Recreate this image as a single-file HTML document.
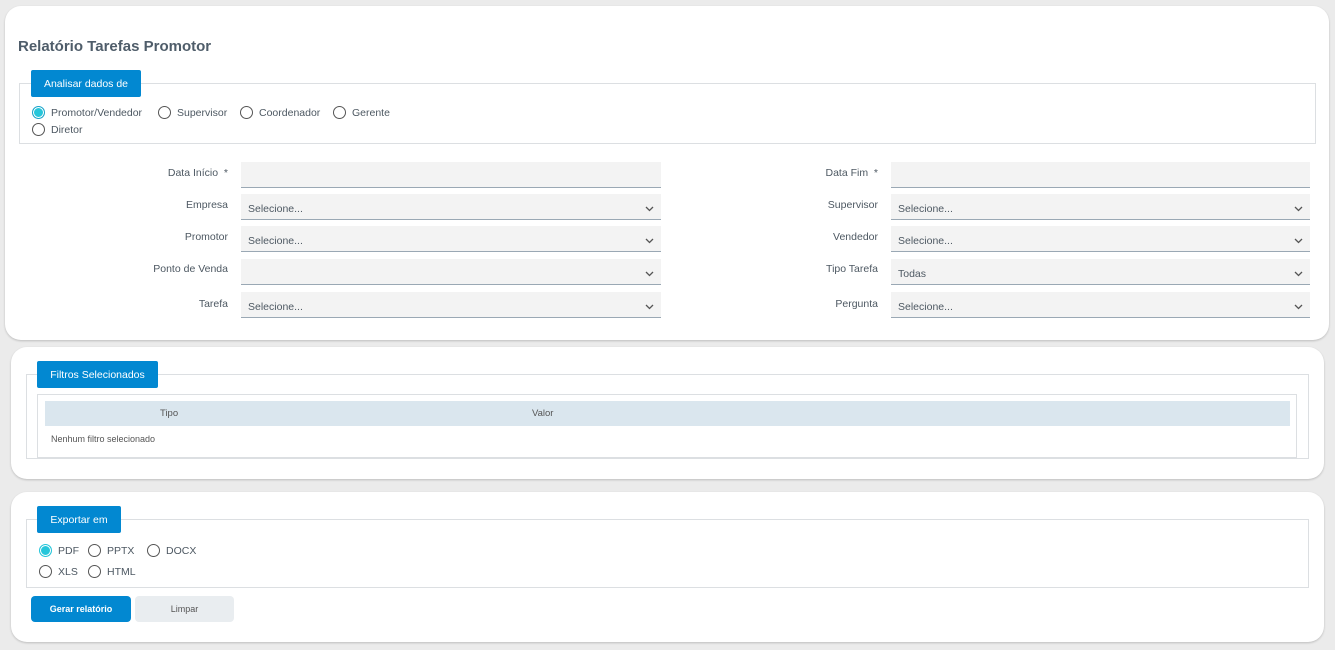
<!DOCTYPE html>
<html><head><meta charset="utf-8"><style>
*{box-sizing:border-box;margin:0;padding:0}
body{width:1335px;height:650px;background:#ebebeb;font-family:"Liberation Sans",sans-serif;position:relative;overflow:hidden;color:#4d5862}
.card{position:absolute;background:#fff;border-radius:16px;box-shadow:0 1px 2px rgba(0,0,0,.2)}
.abs{position:absolute}
.fs{position:absolute;border:1px solid #dcdfe2}
.leg{position:absolute;background:#0288d1;color:#fff;font-size:10.5px;display:flex;align-items:center;justify-content:center;border-radius:2px}
.r{position:absolute;font-size:10.5px;display:flex;align-items:center;color:#4d5862}
.r i{display:inline-block;width:13px;height:13px;border:1px solid #555;border-radius:50%;margin-right:6px}
.r i.on{border-color:#1aa3c9;background:#26c6da;box-shadow:inset 0 0 0 1px #fff}
.lbl{position:absolute;font-size:10.5px;text-align:right;width:200px;color:#4d5862}
.inp{position:absolute;height:26px;background:#f3f3f3;border-bottom:1px solid #9aa8b4;font-size:10.5px;padding:9px 0 0 7px;color:#4d5862}
.inp svg{position:absolute;right:7px;top:12px}
</style></head><body>
<div class="card" style="left:5px;top:6px;width:1324px;height:334px"></div>
<div class="abs" style="left:18px;top:38px;font-size:15px;font-weight:bold;color:#4f5d6a">Relatório Tarefas Promotor</div>
<div class="fs" style="left:19px;top:83px;width:1297px;height:61px"></div>
<div class="leg" style="left:31px;top:70px;width:110px;height:27px">Analisar dados de</div>
<div class="r" style="left:32px;top:106px"><i class="on"></i>Promotor/Vendedor</div>
<div class="r" style="left:158px;top:106px"><i></i>Supervisor</div>
<div class="r" style="left:240px;top:106px"><i></i>Coordenador</div>
<div class="r" style="left:333px;top:106px"><i></i>Gerente</div>
<div class="r" style="left:32px;top:123px"><i></i>Diretor</div>

<div class="lbl" style="left:28px;top:167px">Data Início &nbsp;*</div>
<div class="lbl" style="left:28px;top:199px">Empresa</div>
<div class="lbl" style="left:28px;top:231px">Promotor</div>
<div class="lbl" style="left:28px;top:263px">Ponto de Venda</div>
<div class="lbl" style="left:28px;top:298px">Tarefa</div>
<div class="lbl" style="left:678px;top:167px">Data Fim &nbsp;*</div>
<div class="lbl" style="left:678px;top:199px">Supervisor</div>
<div class="lbl" style="left:678px;top:231px">Vendedor</div>
<div class="lbl" style="left:678px;top:263px">Tipo Tarefa</div>
<div class="lbl" style="left:678px;top:298px">Pergunta</div>

<div class="inp" style="left:241px;top:162px;width:420px"></div>
<div class="inp" style="left:241px;top:194px;width:420px">Selecione...<svg width="9" height="6"><path d="M1 1l3.5 3.5 3.5-3.5" stroke="#555" stroke-width="1.3" fill="none"/></svg></div>
<div class="inp" style="left:241px;top:226px;width:420px">Selecione...<svg width="9" height="6"><path d="M1 1l3.5 3.5 3.5-3.5" stroke="#555" stroke-width="1.3" fill="none"/></svg></div>
<div class="inp" style="left:241px;top:259px;width:420px"><svg width="9" height="6"><path d="M1 1l3.5 3.5 3.5-3.5" stroke="#555" stroke-width="1.3" fill="none"/></svg></div>
<div class="inp" style="left:241px;top:292px;width:420px">Selecione...<svg width="9" height="6"><path d="M1 1l3.5 3.5 3.5-3.5" stroke="#555" stroke-width="1.3" fill="none"/></svg></div>
<div class="inp" style="left:891px;top:162px;width:419px"></div>
<div class="inp" style="left:891px;top:194px;width:419px">Selecione...<svg width="9" height="6"><path d="M1 1l3.5 3.5 3.5-3.5" stroke="#555" stroke-width="1.3" fill="none"/></svg></div>
<div class="inp" style="left:891px;top:226px;width:419px">Selecione...<svg width="9" height="6"><path d="M1 1l3.5 3.5 3.5-3.5" stroke="#555" stroke-width="1.3" fill="none"/></svg></div>
<div class="inp" style="left:891px;top:259px;width:419px">Todas<svg width="9" height="6"><path d="M1 1l3.5 3.5 3.5-3.5" stroke="#555" stroke-width="1.3" fill="none"/></svg></div>
<div class="inp" style="left:891px;top:292px;width:419px">Selecione...<svg width="9" height="6"><path d="M1 1l3.5 3.5 3.5-3.5" stroke="#555" stroke-width="1.3" fill="none"/></svg></div>

<div class="card" style="left:11px;top:347px;width:1313px;height:132px"></div>
<div class="fs" style="left:26px;top:374px;width:1283px;height:85px"></div>
<div class="leg" style="left:37px;top:361px;width:121px;height:27px">Filtros Selecionados</div>
<div class="fs" style="left:37px;top:394px;width:1260px;height:64px"></div>
<div class="abs" style="left:45px;top:401px;width:1245px;height:25px;background:#dae6ee"></div>
<div class="abs" style="left:160px;top:408px;font-size:9.5px;color:#555">Tipo</div>
<div class="abs" style="left:532px;top:408px;font-size:9.5px;color:#555">Valor</div>
<div class="abs" style="left:51px;top:434px;font-size:9px;color:#555">Nenhum filtro selecionado</div>

<div class="card" style="left:11px;top:492px;width:1313px;height:150px"></div>
<div class="fs" style="left:26px;top:519px;width:1283px;height:69px"></div>
<div class="leg" style="left:37px;top:506px;width:84px;height:27px">Exportar em</div>
<div class="r" style="left:39px;top:544px"><i class="on" style="border-color:#26c6da"></i>PDF</div>
<div class="r" style="left:88px;top:544px"><i></i>PPTX</div>
<div class="r" style="left:147px;top:544px"><i></i>DOCX</div>
<div class="r" style="left:39px;top:565px"><i></i>XLS</div>
<div class="r" style="left:88px;top:565px"><i></i>HTML</div>
<div class="abs" style="left:31px;top:596px;width:100px;height:26px;background:#0288d1;border-radius:4px;color:#fff;font-size:9px;font-weight:bold;display:flex;align-items:center;justify-content:center">Gerar relatório</div>
<div class="abs" style="left:135px;top:596px;width:99px;height:26px;background:#e9edf0;border-radius:4px;color:#555;font-size:9px;display:flex;align-items:center;justify-content:center">Limpar</div>
</body></html>
